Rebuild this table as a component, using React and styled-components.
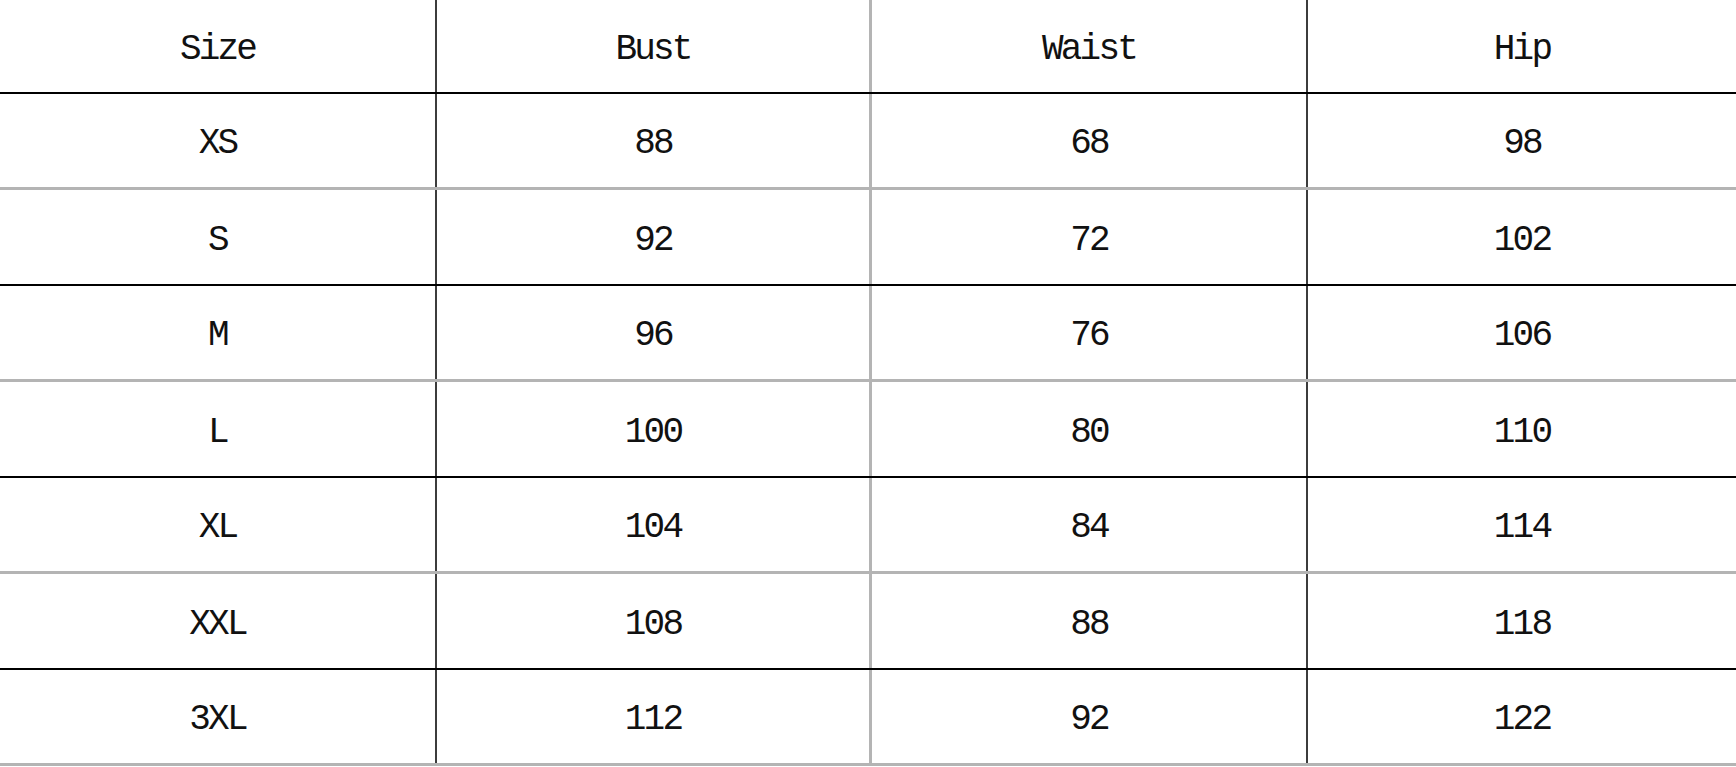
import React from 'react'
import styled, { createGlobalStyle } from 'styled-components'

const GlobalStyle = createGlobalStyle`
    html, body {
        margin: 0;
        padding: 0;
        background: #fff;
    }
`

const Sheet = styled.div`
    width: 1736px;
    height: 767px;
    overflow: hidden;
    background: #fff;
`

const Row = styled.div`
    display: grid;
    grid-template-columns: 437px 435px 436px 1fr;
    box-sizing: border-box;
    height: ${p => (p.head ? 94 : 96)}px;
    border-bottom: ${p => (p.dark ? '2px solid #000' : '3px solid #b4b4b4')};
`

const Cell = styled.div`
    display: flex;
    align-items: center;
    justify-content: center;
    box-sizing: border-box;
    padding-top: 6px;
    font-family: "Liberation Mono", "DejaVu Sans Mono", monospace;
    font-size: 36px;
    letter-spacing: -2.8px;
    color: #111;
    border-right: ${p =>
        p.line === 'dark' ? '2px solid #3c3c3c' : p.line === 'light' ? '3px solid #b4b4b4' : 'none'};
`

const heads = ['Size', 'Bust', 'Waist', 'Hip']
const rows = [
    ['XS', '88', '68', '98'],
    ['S', '92', '72', '102'],
    ['M', '96', '76', '106'],
    ['L', '100', '80', '110'],
    ['XL', '104', '84', '114'],
    ['XXL', '108', '88', '118'],
    ['3XL', '112', '92', '122'],
]
const lines = ['dark', 'light', 'dark', null]

const App = () => (
    <Sheet>
        <GlobalStyle />
        <Row head dark>
            {heads.map((h, i) => <Cell key={h} line={lines[i]}>{h}</Cell>)}
        </Row>
        {rows.map((r, ri) => (
            <Row key={r[0]} dark={ri % 2 === 1}>
                {r.map((v, i) => <Cell key={i} line={lines[i]}>{v}</Cell>)}
            </Row>
        ))}
    </Sheet>
)

export default App
